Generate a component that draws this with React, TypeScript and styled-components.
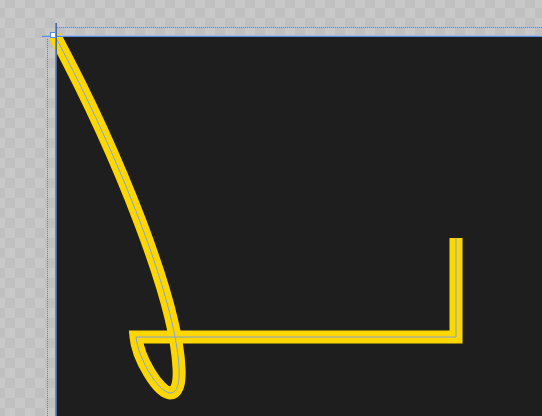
import React from "react";
import styled, { createGlobalStyle } from "styled-components";

const Global = createGlobalStyle`
  html, body {
    margin: 0;
    padding: 0;
    width: 542px;
    height: 416px;
    overflow: hidden;
    font-family: "Liberation Sans", Arial, sans-serif;
  }
`;

const Stage = styled.div`
  position: relative;
  width: 542px;
  height: 416px;
  box-sizing: border-box;
  padding: 37px 0 0 56px;
  display: flex;
  background-color: #c8c8c8;
  background-image:
    linear-gradient(45deg, #c0c0c0 25%, transparent 25%, transparent 75%, #c0c0c0 75%),
    linear-gradient(45deg, #c0c0c0 25%, transparent 25%, transparent 75%, #c0c0c0 75%);
  background-size: 20px 20px;
  background-position: 5px 8px, 15px 18px;
  overflow: hidden;
`;

const Canvas = styled.div`
  position: relative;
  flex: 1;
  background: #1e1e1e;
`;

const Drawing = styled.svg`
  position: absolute;
  left: 0;
  top: 0;
  width: 486px;
  height: 379px;
  overflow: visible;
`;

const Guide = styled.div<{ $dir: "h" | "v"; $dotted?: boolean }>`
  position: absolute;
  ${(p) =>
    p.$dir === "h"
      ? `height: 1px; right: 0;`
      : `width: 1px; bottom: 0;`}
  ${(p) =>
    p.$dotted
      ? p.$dir === "h"
        ? `background-image: linear-gradient(to right, #5a8cf2 50%, #9fb6e0 50%); background-size: 2px 1px;`
        : `background-image: linear-gradient(to bottom, #5a8cf2 50%, #9fb6e0 50%); background-size: 1px 2px;`
      : p.$dir === "h"
      ? `background: #5a8ae6; box-shadow: 0 -1px 0 #a7b9d6;`
      : `background: #5a8ae6; box-shadow: 1px 0 0 #4a6aa0;`}
`;

const Handle = styled.div`
  position: absolute;
  left: 50px;
  top: 32px;
  width: 4px;
  height: 4px;
  background: #ffffff;
  border: 1px solid #5a8ae6;
`;

const pathD =
  "M 55 36 C 119.6 157, 176 300, 179 368 C 180 386, 176 393, 170 393 C 158 392, 138 358, 136 337 L 456 337 L 456 238";

export default function App() {
  return (
    <>
      <Global />
      <Stage>
        <Canvas>
          <Drawing viewBox="56 37 486 379">
            <path
              d={pathD}
              fill="none"
              stroke="#ffd700"
              strokeWidth={13}
              strokeLinejoin="miter"
              strokeLinecap="butt"
            />
            <path d={pathD} fill="none" stroke="#7fa4dc" strokeWidth={1} />
          </Drawing>
        </Canvas>
        <Guide $dir="h" $dotted style={{ top: 27, left: 57 }} />
        <Guide $dir="v" $dotted style={{ left: 47, top: 39 }} />
        <Guide $dir="h" style={{ top: 36, left: 42 }} />
        <Guide $dir="v" style={{ left: 55, top: 23 }} />
        <Handle />
      </Stage>
    </>
  );
}
